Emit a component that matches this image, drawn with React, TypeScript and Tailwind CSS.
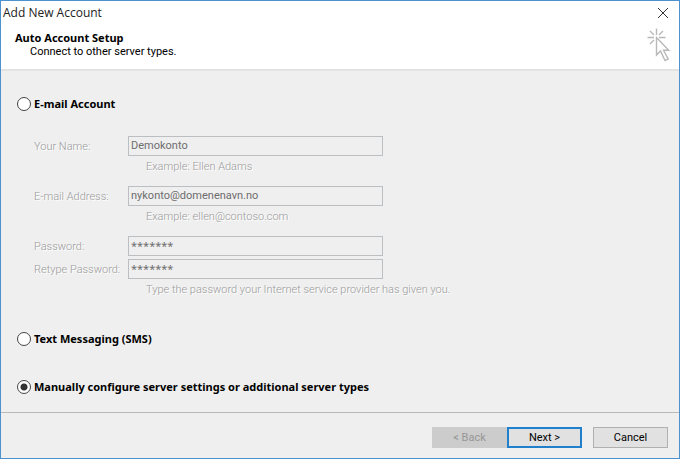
import { useState } from "react";

interface Field {
  id: string;
  label: string;
  value: string;
  masked?: boolean;
  hint?: string;
}

const fieldGroups: Field[][] = [
  [
    {
      id: "name",
      label: "Your Name:",
      value: "Demokonto",
      hint: "Example: Ellen Adams",
    },
  ],
  [
    {
      id: "email",
      label: "E-mail Address:",
      value: "nykonto@domenenavn.no",
      hint: "Example: ellen@contoso.com",
    },
  ],
  [
    { id: "password", label: "Password:", value: "*******", masked: true },
    {
      id: "retype",
      label: "Retype Password:",
      value: "*******",
      masked: true,
      hint: "Type the password your Internet service provider has given you.",
    },
  ],
];

function CursorIcon() {
  return (
    <svg
      viewBox="0 0 24 34"
      fill="none"
      stroke="#b8b8b8"
      strokeWidth="1.4"
      className="h-[34px] w-6 shrink-0"
      aria-hidden="true"
    >
      {/* Sparkle */}
      <path d="M9.500 0.500v6.500M0.500 9.500h6.500M12 9.500h6.500M3 3l4 4M16 3l-4 4M3 16l4-4" />
      {/* Arrow */}
      <path d="M9.500 9.500v17.500l4-4 4.500 9.500 3.200-1.500-4.700-8.700h5.200z" />
    </svg>
  );
}

interface OptionProps {
  label: string;
  value: string;
  selected: string;
  onSelect: (value: string) => void;
}

function Option({ label, value, selected, onSelect }: OptionProps) {
  return (
    <label className="flex h-5 w-fit items-center gap-[3px] font-['Noto_Sans',sans-serif] text-[11px] font-bold">
      <input
        type="radio"
        name="account-type"
        value={value}
        checked={selected === value}
        onChange={() => onSelect(value)}
        className="h-3.5 w-3.5 shrink-0 appearance-none rounded-full border border-[#444] bg-white checked:bg-[radial-gradient(circle,#333_0_3px,#fff_4px)]"
      />
      {label}
    </label>
  );
}

function FieldRow({ field }: { field: Field }) {
  return (
    <div className="grid grid-cols-[94px_minmax(0,1fr)]">
      <label
        htmlFor={field.id}
        className="flex h-5 items-center pt-px font-light whitespace-nowrap text-[#9a9a9a] [text-shadow:1px_1px_0_#fff]"
      >
        {field.label}
      </label>
      <input
        id={field.id}
        type="text"
        defaultValue={field.value}
        disabled
        className={`h-5 w-full max-w-[255px] border border-[#bcbfc1] bg-[#efefef] px-0.5 pb-0.5 text-[#6d6d6d] ${
          field.masked ? "font-['Noto_Sans',sans-serif]" : ""
        }`}
      />
      {field.hint && (
        <p className="col-start-2 flex h-5 items-center pt-px pl-[18px] font-light whitespace-nowrap text-[#9a9a9a] [text-shadow:1px_1px_0_#fff]">
          {field.hint}
        </p>
      )}
    </div>
  );
}

export default function App() {
  const [selected, setSelected] = useState("manual");

  return (
    <div className="flex min-h-screen flex-col border border-[#4a93cf] bg-[#efefef] font-['Roboto',sans-serif] text-[11px] leading-[14px] text-black">
      <header className="border-b-2 border-[#e3e3e3] bg-white">
        <div className="flex h-6 items-center justify-between pr-2.5 pl-0.5">
          <h1 className="font-['Open_Sans',sans-serif] text-[12px] text-[#222]">Add New Account</h1>
          <button type="button" aria-label="Close">
            <svg viewBox="0 0 12 12" stroke="#333" className="h-3 w-3">
              <path d="M1 1l10 10M11 1l-10 10" />
            </svg>
          </button>
        </div>
        <div className="flex h-11 items-start justify-between pt-[3px] pr-2 pl-3.5">
          <div className="pt-[3px]">
            <h2 className="font-['Noto_Sans',sans-serif] font-bold">Auto Account Setup</h2>
            <p className="pl-[15px]">Connect to other server types.</p>
          </div>
          <CursorIcon />
        </div>
      </header>

      <main className="flex-1 px-4 pt-[23px] pb-[15px]">
        <Option label="E-mail Account" value="email" selected={selected} onSelect={setSelected} />
        <div className="mt-[22px] flex flex-col gap-2.5 pl-[17px]">
          {fieldGroups.map((group) => (
            <div key={group[0].id} className="flex flex-col gap-[3px]">
              {group.map((field) => (
                <FieldRow key={field.id} field={field} />
              ))}
            </div>
          ))}
        </div>
        <div className="mt-[30px] flex flex-col gap-7">
          <Option label="Text Messaging (SMS)" value="sms" selected={selected} onSelect={setSelected} />
          <Option
            label="Manually configure server settings or additional server types"
            value="manual"
            selected={selected}
            onSelect={setSelected}
          />
        </div>
      </main>

      <footer className="flex justify-end border-t border-[#b9b9b9] px-[11px] pt-3.5 pb-2.5">
        <button type="button" disabled className="h-[21px] w-[75px] bg-[#cccccc] text-[#969696]">
          &lt; Back
        </button>
        <button type="button" className="h-[21px] w-[75px] border-2 border-[#2180cc] bg-[#e1e1e1]">
          Next &gt;
        </button>
        <button type="button" className="ml-[11px] h-[21px] w-[75px] border border-[#b0b0b0] bg-[#e1e1e1]">
          Cancel
        </button>
      </footer>
    </div>
  );
}
